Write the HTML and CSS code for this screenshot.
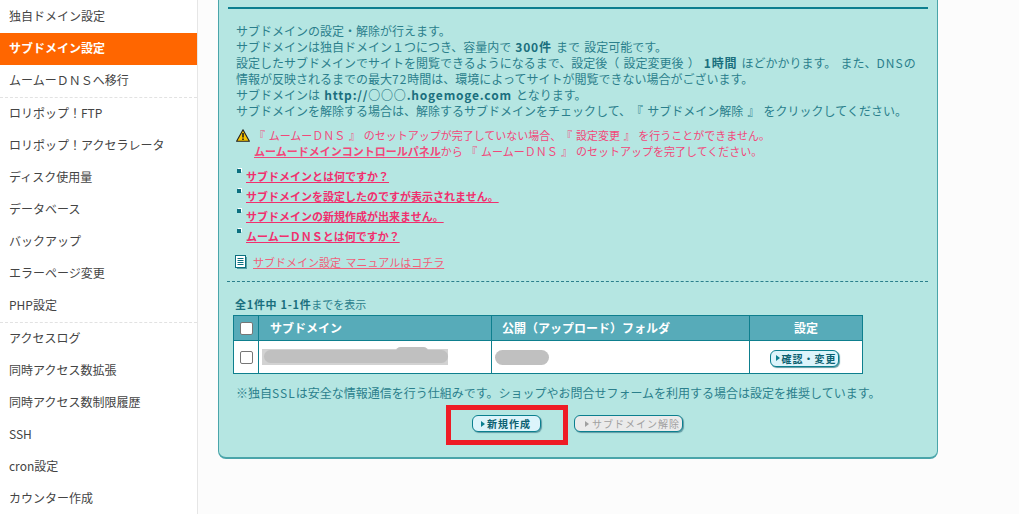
FILE: index.html
```html
<!DOCTYPE html>
<html lang="ja">
<head>
<meta charset="utf-8">
<title>サブドメイン設定</title>
<link rel="stylesheet" href="styles.css">
</head>
<body>
<div class="page">
  <nav class="side">
    <a class="item">独自ドメイン設定</a>
    <a class="item current">サブドメイン設定</a>
    <a class="item group-end">ムームーＤＮＳへ移行</a>
    <a class="item">ロリポップ！FTP</a>
    <a class="item">ロリポップ！アクセラレータ</a>
    <a class="item">ディスク使用量</a>
    <a class="item">データベース</a>
    <a class="item">バックアップ</a>
    <a class="item">エラーページ変更</a>
    <a class="item group-end">PHP設定</a>
    <a class="item">アクセスログ</a>
    <a class="item">同時アクセス数拡張</a>
    <a class="item">同時アクセス数制限履歴</a>
    <a class="item">SSH</a>
    <a class="item">cron設定</a>
    <a class="item">カウンター作成</a>
  </nav>
  <main class="main">
    <section class="panel">
      <div class="topline"></div>
      <div class="intro">
        <p>サブドメインの設定・解除が行えます。</p>
        <p>サブドメインは独自ドメイン１つにつき、容量内で <b>300件</b> まで 設定可能です。</p>
        <p>設定したサブドメインでサイトを閲覧できるようになるまで、設定後（ 設定変更後 ） <b>1時間</b> ほどかかります。 また、<span class="latin">DNS</span>の</p>
        <p>情報が反映されるまでの最大<span class="latin">72</span>時間は、環境によってサイトが閲覧できない場合がございます。</p>
        <p>サブドメインは <b class="url">http://○○○.hogemoge.com</b> となります。</p>
        <p>サブドメインを解除する場合は、解除するサブドメインをチェックして、『 サブドメイン解除 』 をクリックしてください。</p>
      </div>
      <div class="warn">
        <svg class="warn-icon" width="14" height="13" viewBox="0 0 14 13"><path d="M7 .8 13.400 12.300H.6Z" fill="#f5c400" stroke="#222" stroke-width="1.1" stroke-linejoin="round"/><path d="M7 4v4.600M7 9.600v1.400" stroke="#222" stroke-width="1.6"/></svg>
        <div>
          <p>『 ムームーＤＮＳ 』 のセットアップが完了していない場合、『 設定変更 』 を行うことができません。</p>
          <p><a class="warn-link">ムームードメインコントロールパネル</a>から 『 ムームーＤＮＳ 』 のセットアップを完了してください。</p>
        </div>
      </div>
      <ul class="faq">
        <li><a>サブドメインとは何ですか？</a></li>
        <li><a>サブドメインを設定したのですが表示されません。</a></li>
        <li><a>サブドメインの新規作成が出来ません。</a></li>
        <li><a>ムームーＤＮＳとは何ですか？</a></li>
      </ul>
      <div class="manual">
        <svg width="12" height="14" viewBox="0 0 12 14"><rect x="2" y="2" width="10" height="12" fill="#5a9ea6"/><rect x=".5" y=".5" width="10" height="12" fill="#fff" stroke="#0b6f7f"/><path d="M2.500 3.500h6M2.500 5.500h6M2.500 7.500h6M2.500 9.500h6" stroke="#0b6f7f"/></svg>
        <a>サブドメイン設定 マニュアルはコチラ</a>
      </div>
      <div class="rule"></div>
      <p class="count"><b>全1件中 1-1件</b>までを表示</p>
      <table class="list">
        <thead>
          <tr>
            <th class="c-check"><input type="checkbox" class="check"></th>
            <th class="c-name">サブドメイン</th>
            <th class="c-folder">公開（アップロード）フォルダ</th>
            <th class="c-set">設定</th>
          </tr>
        </thead>
        <tbody>
          <tr>
            <td class="c-check"><input type="checkbox" class="check"></td>
            <td class="c-name"><div class="mask-name"><span class="blob-a"></span><span class="blob-b"></span></div></td>
            <td class="c-folder"><div class="mask-folder"></div></td>
            <td class="c-set"><span class="btn btn-edit"><i class="tri"></i>確認・変更</span></td>
          </tr>
        </tbody>
      </table>
      <p class="note">※独自<span class="latin">SSL</span>は安全な情報通信を行う仕組みです。ショップやお問合せフォームを利用する場合は設定を推奨しています。</p>
      <div class="actions">
        <span class="btn btn-new"><i class="tri"></i>新規作成</span>
        <span class="btn btn-off"><i class="tri"></i>サブドメイン解除</span>
        <div class="redbox"></div>
      </div>
    </section>
  </main>
</div>
</body>
</html>
```
FILE: styles.css
```css
* { box-sizing: border-box; }
html, body { margin: 0; height: 100%; overflow: hidden; }
body {
  background: #fcfcfc;
  font-family: "Noto Sans CJK JP", "Noto Sans", sans-serif;
  font-size: 12px;
  color: #2b7f8c;
  text-spacing-trim: space-all;
}
p { margin: 0; }
.page { display: flex; height: 514px; }
.side {
  width: 198px;
  flex: none;
  padding-top: 1px;
  background: #fff;
  border-right: 1px solid #e6e6e6;
}
.item {
  display: block;
  height: 32px;
  padding-left: 9px;
  line-height: 30px;
  color: #444;
  white-space: nowrap;
}
.item.current { background: #ff6600; color: #fff; font-weight: 700; }
.item.group-end { height: 33px; border-bottom: 1px dashed #e2e2e2; }
.main { flex: none; width: 740px; padding-left: 20px; }
.panel {
  width: 720px;
  height: 459px;
  padding: 7px 9px 0;
  background: #b5e6e2;
  border: 1px solid #4aa5aa;
  border-top: 0;
  border-bottom-width: 2px;
  border-radius: 0 0 8px 8px;
}
.topline { height: 2px; background: #0b7f8f; }
.intro { margin-top: 14px; padding-left: 8px; line-height: 16px; white-space: nowrap; word-spacing: 1.500px; }
.intro b { color: #1a6f7e; letter-spacing: .8px; }
.intro b.url { letter-spacing: .8px; }
.latin { letter-spacing: 1px; }
.warn {
  display: flex;
  gap: 4px;
  margin-top: 8px;
  padding-left: 8px;
  line-height: 16px;
  color: #f2487a;
  white-space: nowrap;
  font-size: 11px;
  word-spacing: 1.200px;
}
.warn-icon { margin-top: 2px; flex: none; }
.warn-link { font-weight: 700; text-decoration: underline; }
.faq {
  list-style: none;
  margin: 7px 0 0;
  padding: 0 0 0 8px;
  font-size: 11px;
  font-weight: 700;
  color: #f0306e;
}
.faq li { position: relative; height: 20px; padding-left: 10px; line-height: 20px; }
.faq li::before {
  content: "";
  position: absolute;
  left: 1px;
  top: 3px;
  width: 4px;
  height: 4px;
  background: #0b6f7f;
  box-shadow: 1px -1px 0 #fff;
}
.faq a { text-decoration: underline; }
.manual {
  display: flex;
  align-items: center;
  gap: 6px;
  height: 16px;
  margin-top: 8px;
  padding-left: 7px;
  font-size: 11px;
  color: #f0607a;
  word-spacing: 2px;
}
.manual a { text-decoration: underline; }
.rule { margin-top: 11px; border-top: 1px dashed #2b7f8c; margin-left: -1px; }
.count { margin-top: 14px; padding-left: 7px; font-size: 11px; line-height: 16px; }
.count b { color: #1a6f7e; letter-spacing: .7px; }
.list {
  margin: 3px 0 0 5px;
  width: 630px;
  table-layout: fixed;
  border-collapse: collapse;
  background: #fff;
  font-size: 12px;
}
.list th, .list td { border: 1px solid #0e7f8e; padding: 0; }
.list thead tr { height: 25px; }
.list tbody tr { height: 33px; }
.list th { background: #57abb9; color: #fff; font-weight: 700; line-height: 21px; padding-bottom: 2px; }
.list th.c-check { padding-bottom: 0; }
.c-check { width: 25px; text-align: center; }
.c-name { width: 233px; }
th.c-name { text-align: left; padding-left: 11px; }
.c-folder { width: 258px; }
th.c-folder { text-align: left; padding-left: 10px; }
.c-set { text-align: center; }
.check {
  appearance: none;
  display: block;
  width: 13px;
  height: 13px;
  margin: 0 auto;
  background: #fff;
  border: 1px solid #767676;
  border-radius: 2px;
}
.mask-name {
  position: relative;
  width: 186px;
  height: 16px;
  margin-left: 3px;
  background: #d2d2d2;
}
.blob-a {
  position: absolute;
  left: 2px;
  right: 0;
  top: 1px;
  height: 13px;
  background: #c0c0c0;
  border-radius: 7px;
}
.blob-b {
  position: absolute;
  right: 20px;
  top: -2px;
  width: 32px;
  height: 9px;
  background: #c0c0c0;
  border-radius: 5px;
}
.mask-folder {
  width: 54px;
  height: 15px;
  margin-left: 3px;
  background: #c0c0c0;
  border-radius: 8px;
}
.btn {
  display: inline-flex;
  align-items: center;
  height: 17px;
  border: 1px solid #0b7f8f;
  border-radius: 6px;
  background: #dcf4fb;
  color: #0b6070;
  font-size: 10px;
  font-weight: 700;
  letter-spacing: 1px;
  white-space: nowrap;
  box-shadow: 1px 1px 1px #5f9aa3;
}
.tri {
  flex: none;
  width: 0;
  height: 0;
  margin-right: 2px;
  border-left: 4px solid #0b7f8f;
  border-top: 3px solid transparent;
  border-bottom: 3px solid transparent;
}
.btn-edit { width: 69px; padding-left: 5px; margin-right: 4px; }
.note { margin-top: 10px; padding-left: 8px; line-height: 18px; white-space: nowrap; }
.actions {
  position: relative;
  display: flex;
  gap: 33px;
  margin-top: 13px;
  padding-left: 244px;
}
.btn-new { width: 69px; padding-left: 8px; }
.btn-off {
  width: 109px;
  padding-left: 10px;
  background: #ebebeb;
  color: #a0a0a0;
  font-weight: 400;
}
.btn-off .tri { border-left-color: #a0a0a0; margin-right: 3px; }
.redbox {
  position: absolute;
  left: 218px;
  top: -10px;
  width: 122px;
  height: 40px;
  border: 5px solid #ee1c25;
}
```
